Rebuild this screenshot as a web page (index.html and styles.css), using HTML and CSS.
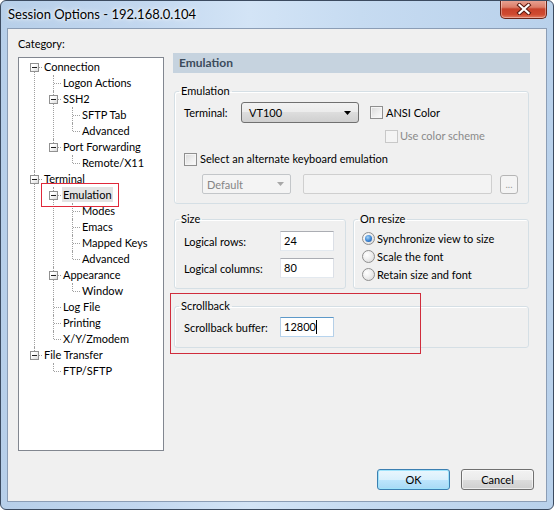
FILE: index.html
```html
<!DOCTYPE html>
<html>
<head>
<meta charset="utf-8">
<title>Session Options</title>
<link rel="stylesheet" href="styles.css">
</head>
<body>
<div class="window">
  <div class="titlebar">
    <span class="title">Session Options - 192.168.0.104</span>
    <div class="close">
      <svg width="16" height="12" viewBox="0 0 16 12"><path d="M3.5 2 L12.5 10 M12.5 2 L3.5 10" stroke="#5b1a10" stroke-width="4.2" stroke-linecap="square" fill="none"/><path d="M3.5 2 L12.5 10 M12.5 2 L3.5 10" stroke="#fff" stroke-width="2.2" stroke-linecap="square" fill="none"/></svg>
    </div>
  </div>
  <div class="client">
    <div class="main">
      <div class="left">
        <div class="cat">Category:</div>
        <div class="tree">
          <ul class="root">
            <li><div class="row"><span class="exp"></span>Connection</div>
              <ul>
                <li><div class="row">Logon Actions</div></li>
                <li><div class="row"><span class="exp"></span>SSH2</div>
                  <ul>
                    <li><div class="row">SFTP Tab</div></li>
                    <li><div class="row">Advanced</div></li>
                  </ul>
                </li>
                <li><div class="row"><span class="exp"></span>Port Forwarding</div>
                  <ul>
                    <li><div class="row">Remote/X11</div></li>
                  </ul>
                </li>
              </ul>
            </li>
            <li><div class="row"><span class="exp"></span>Terminal</div>
              <ul>
                <li><div class="row"><span class="exp"></span><span class="sel">Emulation</span></div>
                  <ul>
                    <li><div class="row">Modes</div></li>
                    <li><div class="row">Emacs</div></li>
                    <li><div class="row">Mapped Keys</div></li>
                    <li><div class="row">Advanced</div></li>
                  </ul>
                </li>
                <li><div class="row"><span class="exp"></span>Appearance</div>
                  <ul>
                    <li><div class="row">Window</div></li>
                  </ul>
                </li>
                <li><div class="row">Log File</div></li>
                <li><div class="row">Printing</div></li>
                <li><div class="row">X/Y/Zmodem</div></li>
              </ul>
            </li>
            <li><div class="row"><span class="exp"></span>File Transfer</div>
              <ul>
                <li><div class="row">FTP/SFTP</div></li>
              </ul>
            </li>
          </ul>
        </div>
      </div>
      <div class="right">
        <div class="header">Emulation</div>
        <fieldset class="group g-emu">
          <legend>Emulation</legend>
          <div class="body">
            <div class="r1">
              <span class="lbl-term">Terminal:</span>
              <div class="combo"><span>VT100</span><svg width="7" height="4" viewBox="0 0 7 4"><path d="M0 0 H7 L3.5 4 Z" fill="#000"/></svg></div>
              <span class="cb cb-ansi"></span><span class="cb-lbl">ANSI Color</span>
            </div>
            <div class="r2">
              <span class="cb disabled"></span><span class="cb-lbl dis">Use color scheme</span>
            </div>
            <div class="r3">
              <span class="cb"></span><span class="cb-lbl">Select an alternate keyboard emulation</span>
            </div>
            <div class="r4">
              <div class="combo-d"><span>Default</span><svg width="7" height="4" viewBox="0 0 7 4"><path d="M0 0 H7 L3.5 4 Z" fill="#a8a8a8"/></svg></div>
              <div class="field-d"></div>
              <div class="btn-d">...</div>
            </div>
          </div>
        </fieldset>
        <div class="pair">
          <fieldset class="group g-size">
            <legend>Size</legend>
            <div class="body">
              <div class="frow f1"><span class="flbl">Logical rows:</span><div class="input">24</div></div>
              <div class="frow f2"><span class="flbl">Logical columns:</span><div class="input">80</div></div>
            </div>
          </fieldset>
          <fieldset class="group g-resize">
            <legend>On resize</legend>
            <div class="body">
              <div class="rrow"><span class="radio on"></span><span class="rlbl">Synchronize view to size</span></div>
              <div class="rrow"><span class="radio"></span><span class="rlbl">Scale the font</span></div>
              <div class="rrow"><span class="radio"></span><span class="rlbl">Retain size and font</span></div>
            </div>
          </fieldset>
        </div>
        <fieldset class="group g-scroll">
          <legend>Scrollback</legend>
          <div class="body">
            <div class="frow f1"><span class="flbl">Scrollback buffer:</span><div class="input focus">12800<span class="caret"></span></div></div>
          </div>
        </fieldset>
      </div>
    </div>
    <div class="buttons">
      <div class="btn ok">OK</div>
      <div class="btn">Cancel</div>
    </div>
  </div>
  <div class="mark mark-emu"></div>
  <div class="mark mark-scroll"></div>
</div>
</body>
</html>
```

FILE: styles.css
```css
* { box-sizing: border-box; }
html, body { margin: 0; padding: 0; }
body {
  width: 554px; height: 510px; overflow: hidden; background: #fff;
  font-family: Lato, "Noto Sans", sans-serif; font-size: 11px; color: #000;
}
.window {
  position: relative;
  width: 554px; height: 510px;
  border: 1px solid #3c4b60;
  border-radius: 6px;
  background: linear-gradient(90deg, #b7cfe9 0%, #c2d7ef 25%, #d3e4f6 45%, #c6dbf1 65%, #b9d1eb 100%);
  display: flex; flex-direction: column;
  overflow: hidden;
}
.titlebar {
  height: 27px; flex: none;
  display: flex; justify-content: space-between; align-items: flex-start;
  padding: 0 6px 0 7px;
}
.title {
  font-size: 13px; line-height: 27px; color: #000;
  text-shadow: 0 0 6px #fff, 0 0 3px #fff;
}
.close {
  width: 47px; height: 19px; margin-top: -1px;
  border: 1px solid #6a2418; border-top: none;
  border-radius: 0 0 5px 5px;
  background: linear-gradient(#e9a596 0%, #dc7d68 40%, #c7412a 50%, #cf4a30 80%, #e27d62 100%);
  display: flex; align-items: center; justify-content: center;
  box-shadow: inset 0 0 0 1px rgba(255,255,255,0.35);
}
.client {
  margin: 0 6px; height: 474px; flex: none;
  border: 1px solid #8b9db5;
  background: #f0f0f0;
  display: flex; flex-direction: column;
}
.main { display: flex; padding-left: 10px; }
.left { width: 146px; padding-top: 7px; }
.cat { height: 16px; line-height: 16px; margin-bottom: 5px; }
.tree {
  height: 394px; background: #fff; border: 1px solid #828790;
  padding-top: 1px; overflow: hidden;
}
.tree ul { list-style: none; margin: 0; padding: 0; }
.tree li > ul { padding-left: 19px; }
.tree li { position: relative; }
.tree li::after {
  content: ""; position: absolute; left: 15px; top: 0; bottom: 0;
  border-left: 1px dotted #a0a0a0;
}
.tree li:last-child::after { bottom: auto; height: 8px; }
.tree .root > li:first-child::after { top: 8px; }
.row {
  position: relative; height: 16px; line-height: 16px;
  padding-left: 25px; white-space: nowrap;
}
.row::before {
  content: ""; position: absolute; left: 16px; top: 8px; width: 7px;
  border-top: 1px dotted #a0a0a0;
}
.exp {
  position: absolute; left: 11px; top: 4px; width: 9px; height: 9px; z-index: 2;
  border: 1px solid #919191;
  background: linear-gradient(135deg, #fff 30%, #dcdcdc 100%);
}
.exp::after {
  content: ""; position: absolute; left: 1px; top: 3px; width: 5px; height: 1px; background: #1e1e1e;
}
.sel { background: #e3e3e3; padding: 1px 1px; margin-left: -1px; }

.right { width: 357px; margin-left: 9px; padding-top: 24px; }
.header {
  height: 20px; line-height: 20px; padding-left: 6px; font-size: 12px;
  background: #c6d3df; color: #3c4b5b; font-weight: bold;
}
fieldset.group {
  margin: 0 1px; padding: 0; min-width: 0;
  border: 1px solid #d5dfe5; border-radius: 3px;
  box-shadow: inset 1px 1px 0 #fff;
}
fieldset.group legend {
  margin-left: 4px; padding: 0 2px; line-height: 16px; height: 16px;
}
.g-emu { margin-top: 10px !important; }
.g-emu .body { padding: 0 0 9px 9px; }
.r1 { display: flex; align-items: center; height: 21px; margin-top: 3px; }
.lbl-term { width: 57px; }
.combo {
  width: 118px; height: 21px;
  border: 1px solid #707070; border-radius: 3px;
  background: linear-gradient(#f2f2f2 0%, #ebebeb 50%, #dddddd 50%, #cfcfcf 100%);
  display: flex; align-items: center; justify-content: space-between;
  padding: 0 7px 0 7px;
}
.cb {
  display: inline-block; width: 13px; height: 13px; flex: none;
  border: 1px solid #8f8f8f;
  background: linear-gradient(135deg, #d9d9d9 0%, #f0f0f0 60%, #fbfbfb 100%);
  box-shadow: inset 0 0 0 1px #f5f5f5;
}
.cb.disabled { border-color: #c8c8c8; background: #f4f4f4; box-shadow: none; }
.cb-ansi { margin-left: 11px; }
.cb-lbl { margin-left: 3px; line-height: 16px; }
.cb-lbl.dis { margin-left: 2px; color: #8a8a8a; }
.r2 { display: flex; align-items: center; height: 16px; margin-top: 5px; padding-left: 201px; }
.r3 { display: flex; align-items: center; height: 16px; margin-top: 7px; }
.r4 { display: flex; align-items: center; height: 20px; margin-top: 7px; padding-left: 18px; }
.combo-d {
  width: 89px; height: 20px; border: 1px solid #c3c6c9; border-radius: 2px;
  background: #f4f4f4; color: #858585;
  display: flex; align-items: center; justify-content: space-between; padding: 0 6px 0 4px;
}
.field-d {
  width: 189px; height: 20px; margin-left: 12px;
  border: 1px solid #cfcfcf; border-radius: 2px; background: #f3f3f3;
}
.btn-d {
  width: 18px; height: 19px; margin-left: 8px;
  border: 1px solid #b5b5b5; border-radius: 3px; background: #f4f4f4;
  color: #9a9a9a; font-size: 10px; line-height: 16px; text-align: center;
}
.pair { display: flex; gap: 7px; margin: 7px 1px 0 1px; }
.pair fieldset.group { margin: 0; }
.g-size { width: 172px; }
.g-resize { width: 176px; }
.g-size .body, .g-scroll .body { padding: 0 0 10px 9px; }
.frow { display: flex; align-items: center; height: 20px; }
.frow.f1 { margin-top: 4px; }
.frow.f2 { margin-top: 7px; }
.g-scroll .frow.f1 { margin-top: 3px; }
.flbl { width: 96px; }
.input {
  width: 54px; height: 20px; background: #fff;
  border: 1px solid #abadb3; border-left-color: #e2e3ea; border-right-color: #dbdfe6; border-bottom-color: #e3e9ef;
  padding-left: 3px; line-height: 18px; display: flex; align-items: center;
}
.input.focus { border-color: #5d99c9; border-left-color: #b5cfe7; border-right-color: #b5cfe7; border-bottom-color: #b7d4ee; }
.caret { display: inline-block; width: 1px; height: 14px; background: #000; margin-left: 0; }
.g-resize .body { padding: 2px 0 0 8px; }
.rrow { display: flex; align-items: center; height: 18px; }
.radio {
  position: relative; width: 13px; height: 13px; border-radius: 50%; flex: none;
  border: 1px solid #8f8f8f;
  background: radial-gradient(circle at 35% 35%, #fff 0%, #f0f0f0 40%, #d6d6d6 100%);
}
.radio.on::after {
  content: ""; position: absolute; left: 2px; top: 2px; width: 7px; height: 7px; border-radius: 50%;
  background: radial-gradient(circle at 40% 35%, #a6d4f7 0%, #3a83d1 55%, #1e4f99 100%);
}
.rlbl { margin-left: 2px; }
.g-scroll { margin-top: 9px !important; }
.buttons {
  margin-top: auto; display: flex; justify-content: flex-end; gap: 11px;
  padding: 0 12px 11px 0;
}
.btn {
  width: 73px; height: 21px; line-height: 19px; text-align: center;
  border: 1px solid #707070; border-radius: 3px;
  background: linear-gradient(#f2f2f2 0%, #ebebeb 50%, #dddddd 50%, #cfcfcf 100%);
  box-shadow: inset 0 0 0 1px rgba(255,255,255,0.6);
}
.btn.ok {
  border-color: #3c7fb1;
  background: linear-gradient(#eaf6fd 0%, #d9f0fc 50%, #bee6fd 50%, #a7d9f5 100%);
  box-shadow: inset 0 0 0 1px #9fe3fb;
}
.mark { position: absolute; border: 1px solid #d02c3c; z-index: 5; pointer-events: none; }
.mark-emu { left: 40px; top: 182px; width: 78px; height: 24px; border-color: #e0283a; }
.mark-scroll { left: 169px; top: 292px; width: 251px; height: 61px; }
```
